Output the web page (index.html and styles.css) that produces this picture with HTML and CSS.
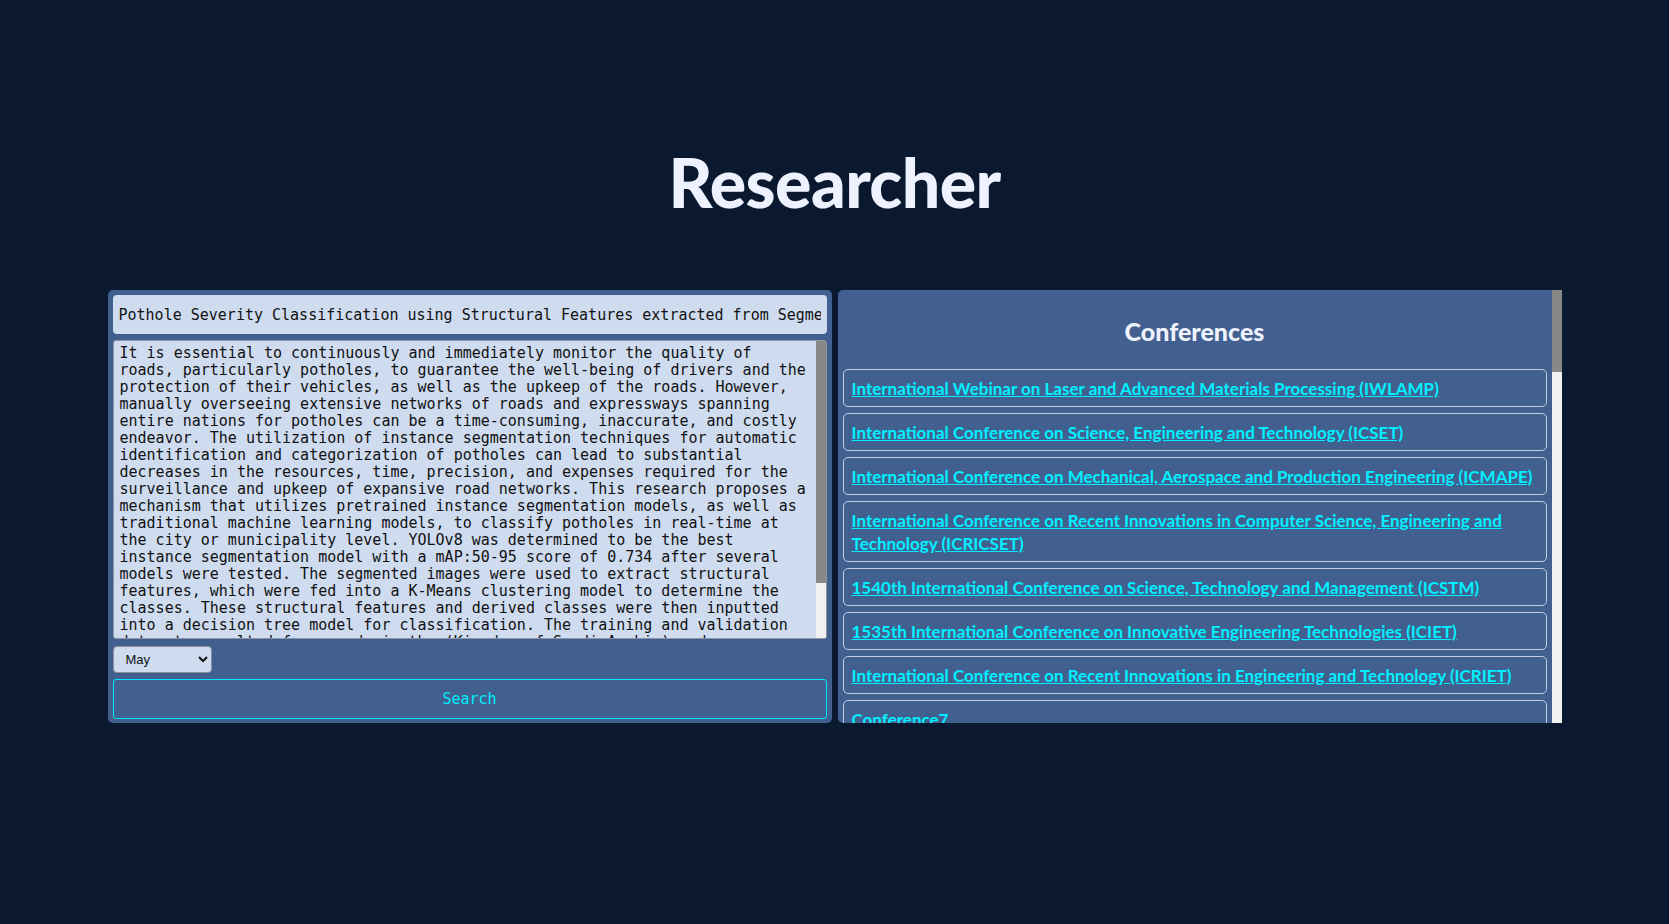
FILE: index.html
```html
<!DOCTYPE html>
<html lang="en">
<head>
<meta charset="utf-8">
<title>Researcher</title>
<link rel="stylesheet" href="styles.css">
</head>
<body>
<main class="page">
  <h1 class="title">Researcher</h1>
  <div class="columns">
    <section class="panel form-panel">
      <input class="title-input" type="text" value="Pothole Severity Classification using Structural Features extracted from Segmented Images">
      <div class="abstract-box">
        <textarea class="abstract">It is essential to continuously and immediately monitor the quality of roads, particularly potholes, to guarantee the well-being of drivers and the protection of their vehicles, as well as the upkeep of the roads. However, manually overseeing extensive networks of roads and expressways spanning entire nations for potholes can be a time-consuming, inaccurate, and costly endeavor. The utilization of instance segmentation techniques for automatic identification and categorization of potholes can lead to substantial decreases in the resources, time, precision, and expenses required for the surveillance and upkeep of expansive road networks. This research proposes a mechanism that utilizes pretrained instance segmentation models, as well as traditional machine learning models, to classify potholes in real-time at the city or municipality level. YOLOv8 was determined to be the best instance segmentation model with a mAP:50-95 score of 0.734 after several models were tested. The segmented images were used to extract structural features, which were fed into a K-Means clustering model to determine the classes. These structural features and derived classes were then inputted into a decision tree model for classification. The training and validation datasets resulted from roads in the (Kingdom of Saudi Arabia) and were combined with public datasets to evaluate the approach.</textarea>
        <div class="fake-scrollbar abstract-scrollbar"><div class="fake-thumb abstract-thumb"></div></div>
      </div>
      <select class="month">
        <option>January</option><option>February</option><option>March</option><option>April</option>
        <option selected>May</option><option>June</option><option>July</option><option>August</option>
        <option>September</option><option>October</option><option>November</option><option>December</option>
      </select>
      <button class="search" type="button">Search</button>
    </section>
    <section class="panel conf-panel">
      <div class="conf-scroll">
        <h2 class="conf-heading">Conferences</h2>
        <ul class="conf-list">
          <li class="conf-card"><a href="#">International Webinar on Laser and Advanced Materials Processing (IWLAMP)</a></li>
          <li class="conf-card"><a href="#">International Conference on Science, Engineering and Technology (ICSET)</a></li>
          <li class="conf-card"><a href="#">International Conference on Mechanical, Aerospace and Production Engineering (ICMAPE)</a></li>
          <li class="conf-card"><a href="#">International Conference on Recent Innovations in Computer Science, Engineering and Technology (ICRICSET)</a></li>
          <li class="conf-card"><a href="#">1540th International Conference on Science, Technology and Management (ICSTM)</a></li>
          <li class="conf-card"><a href="#">1535th International Conference on Innovative Engineering Technologies (ICIET)</a></li>
          <li class="conf-card"><a href="#">International Conference on Recent Innovations in Engineering and Technology (ICRIET)</a></li>
          <li class="conf-card"><a href="#">Conference7</a></li>
          <li class="conf-card"><a href="#">Conference8</a></li>
        </ul>
      </div>
      <div class="fake-scrollbar conf-scrollbar"><div class="fake-thumb conf-thumb"></div></div>
    </section>
  </div>
</main>
</body>
</html>
```
FILE: styles.css
```css
html, body {
  margin: 0;
  padding: 0;
}
body {
  background: #0a1930;
  min-height: 924px;
  font-family: "Lato", "Open Sans", sans-serif;
}
.page {
  display: flex;
  flex-direction: column;
  align-items: center;
  padding-top: 143px;
}
.title {
  margin: 0;
  font-family: "Lato", sans-serif;
  font-weight: 900;
  font-size: 68px;
  line-height: 78px;
  color: #eef2ff;
  letter-spacing: -0.6px;
}
.columns {
  margin-top: 69px;
  width: 1454px;
  display: flex;
  gap: 6px;
}
.panel {
  flex: 0 0 724px;
  width: 724px;
  min-width: 0;
  height: 433px;
  box-sizing: border-box;
  background: #41608f;
  border-radius: 5px;
}
.form-panel {
  display: flex;
  flex-direction: column;
  align-items: flex-start;
  padding: 5px 5px 4px;
}
.title-input {
  box-sizing: border-box;
  width: 100%;
  min-width: 0;
  height: 39px;
  margin: 0 0 6px;
  padding: 0 6px;
  border: none;
  border-radius: 4px;
  background: #cfdcf0;
  color: #111;
  font-family: "DejaVu Sans Mono", monospace;
  font-size: 15px;
  outline: none;
}
.abstract-box {
  position: relative;
  width: 100%;
  height: 299px;
  margin: 0 0 7px;
}
.abstract {
  display: block;
  box-sizing: border-box;
  width: 100%;
  height: 100%;
  margin: 0;
  padding: 4px 16px 2px 6px;
  border: 1px solid #8b93a4;
  border-radius: 3px;
  background: #cfdcf0;
  color: #111;
  font-family: "DejaVu Sans Mono", monospace;
  font-size: 15px;
  line-height: 17px;
  resize: none;
  overflow: hidden;
  outline: none;
}
.fake-scrollbar {
  background: #f1f1f1;
}
.fake-thumb {
  background: #888;
}
.abstract-scrollbar {
  position: absolute;
  top: 1px;
  right: 1px;
  bottom: 1px;
  width: 10px;
}
.abstract-thumb {
  height: 242px;
}
.month {
  box-sizing: border-box;
  width: 99px;
  height: 27px;
  margin: 0 0 6px;
  padding: 0 4px 0 8px;
  border: 1px solid #8a8f99;
  border-radius: 4px;
  background: #cfdcf0;
  color: #111;
  font-family: "Liberation Sans", Arial, sans-serif;
  font-size: 13px;
}
.search {
  box-sizing: border-box;
  width: 100%;
  height: 40px;
  margin: 0;
  border: 1px solid #00e8f8;
  border-radius: 3px;
  background: transparent;
  color: #00eefa;
  font-family: "DejaVu Sans Mono", monospace;
  font-size: 15px;
  cursor: pointer;
}
.conf-panel {
  display: flex;
  overflow: hidden;
  border-radius: 5px 0 0 5px;
}
.conf-scroll {
  flex: 1 1 auto;
  min-width: 0;
  overflow: hidden;
  padding: 0 5px;
}
.conf-scrollbar {
  flex: 0 0 10px;
  align-self: stretch;
}
.conf-thumb {
  height: 82px;
}
.conf-heading {
  margin: 27px 0 23px;
  text-align: center;
  font-family: "Lato", sans-serif;
  font-weight: 900;
  font-size: 25px;
  line-height: 29px;
  color: #eef2ff;
}
.conf-list {
  list-style: none;
  margin: 0;
  padding: 0 0 6px;
}
.conf-card {
  margin: 0 0 6px;
  padding: 6.5px 8px;
  border: 1px solid #c3cbe0;
  border-radius: 5px;
  font-family: "Lato", sans-serif;
  font-weight: 700;
  font-size: 17px;
  line-height: 23px;
}
.conf-card a {
  color: #00f0ff;
  text-decoration: underline;
}
```
